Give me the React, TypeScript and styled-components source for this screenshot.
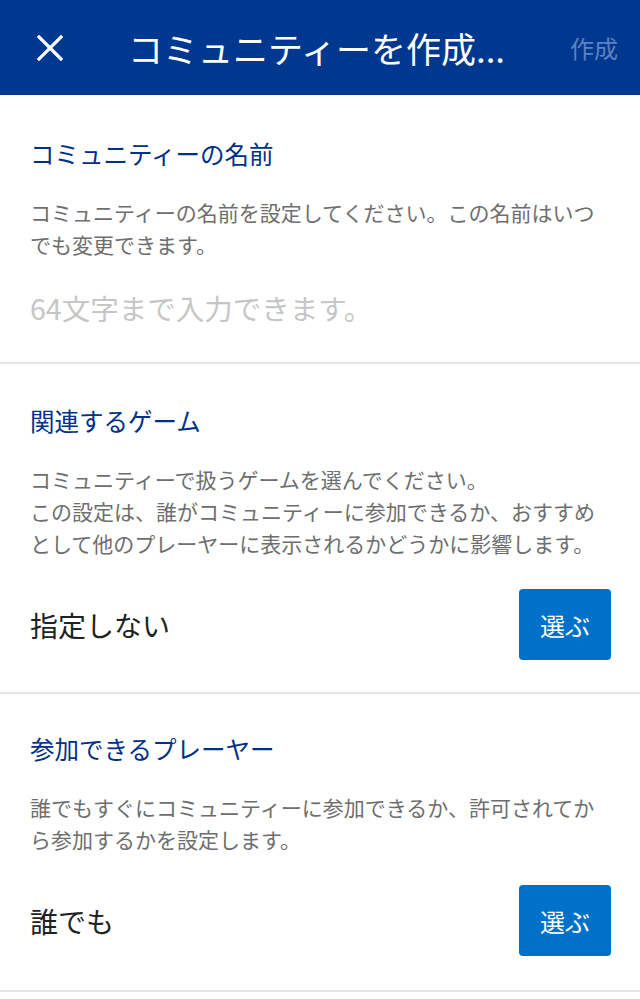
import * as React from "react";
import styled, { createGlobalStyle } from "styled-components";

const GlobalStyle = createGlobalStyle`
  html, body {
    margin: 0;
    padding: 0;
    background: #fff;
  }
  body {
    font-family: "Noto Sans CJK JP", "Noto Sans", sans-serif;
    -webkit-font-smoothing: antialiased;
  }
`;

const Page = styled.div`
  width: 640px;
  min-height: 999px;
  background: #fff;
`;

const HeaderBar = styled.header`
  height: 95px;
  background: #00388f;
  display: flex;
  align-items: center;
  padding: 0 22px 0 30px;
  box-sizing: border-box;
`;

const CloseButton = styled.button`
  width: 40px;
  height: 40px;
  padding: 0;
  border: 0;
  background: transparent;
  display: flex;
  align-items: center;
  justify-content: center;
  cursor: pointer;
`;

const HeaderTitle = styled.h1`
  flex: 1;
  margin: 0 0 0 58px;
  color: #fff;
  font-size: 35px;
  font-weight: 400;
  line-height: 44px;
  white-space: nowrap;
`;

const HeaderAction = styled.span`
  color: #5f81c4;
  font-size: 24px;
  line-height: 32px;
`;

const Section = styled.section<{ $top: number; $bottom?: number }>`
  padding: ${(p) => p.$top}px 30px ${(p) => p.$bottom ?? 34}px;
  border-bottom: 2px solid #e6e6e6;
`;

const Title = styled.h2`
  margin: 0;
  color: #003087;
  font-size: 24.5px;
  font-weight: 400;
  line-height: 36px;
`;

const Description = styled.p`
  margin: 24px 0 0;
  color: #6e6e6e;
  font-size: 21px;
  line-height: 32px;
`;

const Placeholder = styled.div`
  margin-top: 28px;
  color: #c6c6c6;
  font-size: 28.5px;
  line-height: 40px;
`;

const ChoiceRow = styled.div`
  margin-top: 30px;
  display: flex;
  align-items: center;
  justify-content: space-between;
`;

const ChoiceValue = styled.span`
  color: #222;
  font-size: 28px;
  line-height: 40px;
`;

const SelectButton = styled.button`
  width: 92px;
  height: 71px;
  margin-right: -1px;
  border: 0;
  border-radius: 4px;
  background: #0071c9;
  color: #fff;
  font-family: inherit;
  font-size: 25px;
  cursor: pointer;
`;

const CloseIcon = () => (
  <svg width="26" height="26" viewBox="0 0 26 26">
    <path d="M2 2 L24 24 M24 2 L2 24" stroke="#fff" strokeWidth="3.2" strokeLinecap="square" />
  </svg>
);

interface ChoiceProps {
  value: string;
}

const Choice = ({ value }: ChoiceProps) => (
  <ChoiceRow>
    <ChoiceValue>{value}</ChoiceValue>
    <SelectButton>選ぶ</SelectButton>
  </ChoiceRow>
);

export default function App() {
  return (
    <Page>
      <GlobalStyle />
      <HeaderBar>
        <CloseButton aria-label="close">
          <CloseIcon />
        </CloseButton>
        <HeaderTitle>コミュニティーを作成...</HeaderTitle>
        <HeaderAction>作成</HeaderAction>
      </HeaderBar>

      <Section $top={41}>
        <Title>コミュニティーの名前</Title>
        <Description>コミュニティーの名前を設定してください。この名前はいつでも変更できます。</Description>
        <Placeholder>64文字まで入力できます。</Placeholder>
      </Section>

      <Section $top={39} $bottom={32}>
        <Title>関連するゲーム</Title>
        <Description>
          コミュニティーで扱うゲームを選んでください。
          <br />
          この設定は、誰がコミュニティーに参加できるか、おすすめとして他のプレーヤーに表示されるかどうかに影響します。
        </Description>
        <Choice value="指定しない" />
      </Section>

      <Section $top={37}>
        <Title>参加できるプレーヤー</Title>
        <Description>誰でもすぐにコミュニティーに参加できるか、許可されてから参加するかを設定します。</Description>
        <Choice value="誰でも" />
      </Section>
    </Page>
  );
}
